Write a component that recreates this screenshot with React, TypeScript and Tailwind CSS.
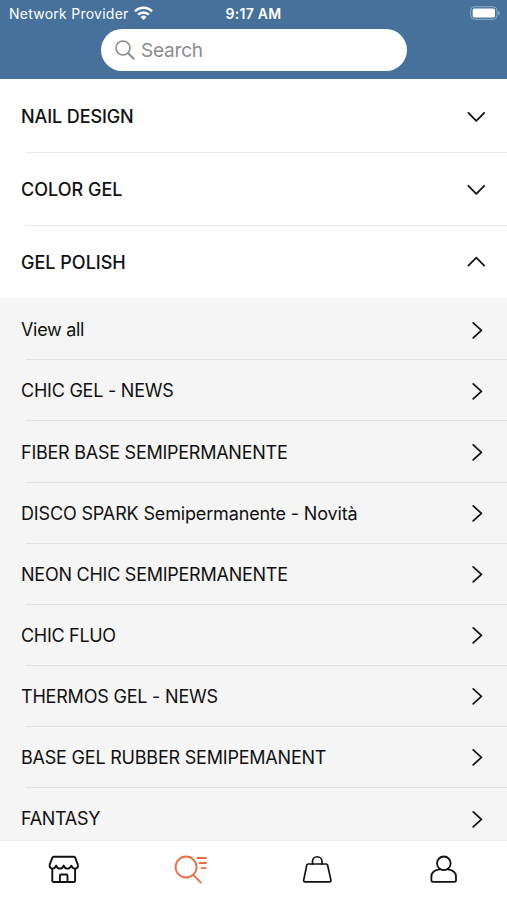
import React from "react";

const categories = [
  { label: "NAIL DESIGN", open: false, tracking: "tracking-[-0.1px]" },
  { label: "COLOR GEL", open: false, tracking: "tracking-[0px]" },
  { label: "GEL POLISH", open: true, tracking: "tracking-[0px]" },
];

const items = [
  { label: "View all", tracking: "tracking-[-0.3px]" },
  { label: "CHIC GEL - NEWS", tracking: "tracking-[-0.23px]" },
  { label: "FIBER BASE SEMIPERMANENTE", tracking: "tracking-[-0.25px]" },
  { label: "DISCO SPARK Semipermanente - Novità", tracking: "tracking-[-0.15px]" },
  { label: "NEON CHIC SEMIPERMANENTE", tracking: "tracking-[-0.25px]" },
  { label: "CHIC FLUO", tracking: "tracking-[-0.3px]" },
  { label: "THERMOS GEL - NEWS", tracking: "tracking-[-0.2px]" },
  { label: "BASE GEL RUBBER SEMIPEMANENT", tracking: "tracking-[-0.21px]" },
  { label: "FANTASY", tracking: "tracking-[-0.3px]" },
];

function StatusBar() {
  return (
    <div className="grid h-[28px] grid-cols-3 items-center text-[14px] leading-none text-white">
      <div className="flex items-center gap-[5px] whitespace-nowrap pl-[9px]">
        <span className="tracking-[0.25px]">Network Provider</span>
        <svg width="19" height="15" viewBox="0 0 19 15" fill="none" stroke="white" strokeWidth="2.5" className="-mt-[2px] shrink-0">
          <path d="M1 5.3a12 12 0 0 1 17 0" />
          <path d="M4.1 8.6a7.7 7.7 0 0 1 10.8 0" />
          <path d="M9.5 14 6.5 11a4.4 4.4 0 0 1 6 0Z" fill="white" stroke="none" />
        </svg>
      </div>
      <div className="text-center font-semibold tracking-[0.3px]">9:17 AM</div>
      <div className="flex justify-end pr-[7px]">
        <svg width="30" height="14" viewBox="0 0 30 14" fill="none" className="-mt-[2px]">
          <rect x="0.7" y="0.7" width="26.3" height="12.6" rx="3.8" stroke="#8fadc8" strokeWidth="1" />
          <rect x="2.7" y="2.5" width="22.3" height="9" rx="1.6" fill="white" />
          <path d="M28.2 4.8c2 1 2 3.4 0 4.4Z" fill="#8fadc8" />
        </svg>
      </div>
    </div>
  );
}

function Chevron({ direction }: { direction: "up" | "down" | "right" }) {
  const paths = {
    down: "M2.4 6.8 10.3 14.8 18.2 6.8",
    up: "M2.4 13.6 10.3 5.6 18.2 13.6",
    right: "M7.2 2.9 15.4 10.4 7.2 17.9",
  };
  return (
    <svg width="20" height="20" viewBox="0 0 20 20" fill="none" stroke="#151515" strokeWidth="1.8" strokeLinecap="round" strokeLinejoin="round" className="shrink-0">
      <path d={paths[direction]} />
    </svg>
  );
}

function TabBar() {
  return (
    <nav className="grid h-[60px] shrink-0 grid-cols-4 border-t border-[#ececec] bg-white">
      <div className="flex justify-center pl-[2px] pt-[12px]">
        <svg width="34" height="34" viewBox="0 0 34 34" fill="none" stroke="#111" strokeWidth="1.9" strokeLinecap="round" strokeLinejoin="round">
          <path d="M6.8 3.8h20c.7 0 1.1.3 1.4.9l2.7 6.9c.5 2.5-1.1 4-2.8 4-1.9 0-3.3-1.3-3.8-3-.6 1.7-1.9 3-3.8 3s-3.2-1.3-3.8-3c-.6 1.7-1.9 3-3.8 3s-3.2-1.3-3.8-3c-.5 1.7-1.7 3-3.6 3-1.7 0-3.3-1.5-2.8-4l2.7-6.9c.3-.6.7-.9 1.4-.9Z" />
          <path d="M5.3 16v11.8c0 .8.4 1.2 1.2 1.2h20.4c.8 0 1.2-.4 1.2-1.2V16M12.9 29v-6.3c0-.8.4-1.2 1.2-1.2h5.2c.8 0 1.2.4 1.2 1.2V29" />
        </svg>
      </div>
      <div className="flex justify-center pt-[12px]">
        <svg width="34" height="34" viewBox="0 0 34 34" fill="none" stroke="#ed6b40" strokeWidth="1.8" strokeLinecap="round">
          <circle cx="13.1" cy="14" r="10.5" />
          <path d="m20.3 21.8 7.6 7.8M24.4 5h8.6M26.6 10h6.4M28.5 15.1h4.2" />
        </svg>
      </div>
      <div className="flex justify-center pt-[12px]">
        <svg width="34" height="34" viewBox="0 0 34 34" fill="none" stroke="#111" strokeWidth="1.7" strokeLinecap="round" strokeLinejoin="round">
          <path d="M8.2 11h18c.9 0 1.2.4 1.4 1.1l3.3 15c.2 1.1-.4 1.8-1.4 1.8H5.1c-1 0-1.6-.7-1.4-1.8L6.8 12.1c.2-.7.5-1.1 1.4-1.1Z" />
          <path d="M12.5 11V8.5a4.75 4.75 0 0 1 9.5 0V11" />
        </svg>
      </div>
      <div className="flex justify-center pt-[12px]">
        <svg width="34" height="34" viewBox="0 0 34 34" fill="none" stroke="#111" strokeWidth="1.8" strokeLinecap="round" strokeLinejoin="round">
          <circle cx="16.8" cy="10.3" r="6.8" />
          <path d="M12.4 16.3C7.6 17.1 4.4 19.6 4.4 23.4v3.9c0 1 .6 1.6 1.6 1.6h21.4c1 0 1.6-.6 1.6-1.6v-3.9c0-3.8-3.2-6.3-8-7.1" />
        </svg>
      </div>
    </nav>
  );
}

export default function App() {
  return (
    <div className="flex h-[900px] w-[507px] flex-col overflow-hidden bg-white font-['Inter','Liberation_Sans',sans-serif] text-[#111]">
      <header className="h-[79px] shrink-0 bg-[#46719b]">
        <StatusBar />
        <div className="ml-[101px] mt-px flex h-[41.5px] w-[305.5px] items-center gap-[6px] rounded-full bg-white pl-[14px] text-[#8c8c8c]">
          <svg width="20" height="20" viewBox="0 0 20 20" fill="none" stroke="currentColor" strokeWidth="1.6" strokeLinecap="round">
            <circle cx="8" cy="8" r="7" />
            <path d="m13.2 13.2 5.5 5.5" strokeWidth="2" />
          </svg>
          <span className="pt-px text-[19px] leading-none tracking-[-0.2px]">Search</span>
        </div>
      </header>
      <main className="min-h-0 flex-1 overflow-hidden">
        {categories.map((c) => (
          <section key={c.label}>
            <div className="flex h-[73.1px] items-center justify-between pl-[21px] pr-[21px] pt-px">
              <span className={"whitespace-nowrap pt-px text-[18px] font-medium leading-none " + c.tracking}>{c.label}</span>
              <Chevron direction={c.open ? "up" : "down"} />
            </div>
            {!c.open && <div className="-mb-px ml-[26px] h-px bg-[#e9e9e9]" />}
          </section>
        ))}
        <div className="bg-[#f5f5f5]">
          {items.map((item) => (
            <div key={item.label}>
              <div className="flex h-[61.1px] items-center justify-between pl-[21px] pr-[21px] pt-[2px]">
                <span className={"whitespace-nowrap pt-px text-[18px] leading-none " + item.tracking}>{item.label}</span>
                <Chevron direction="right" />
              </div>
              <div className="-mb-px ml-[26px] h-px bg-[#e2e2e2]" />
            </div>
          ))}
        </div>
      </main>
      <TabBar />
    </div>
  );
}
